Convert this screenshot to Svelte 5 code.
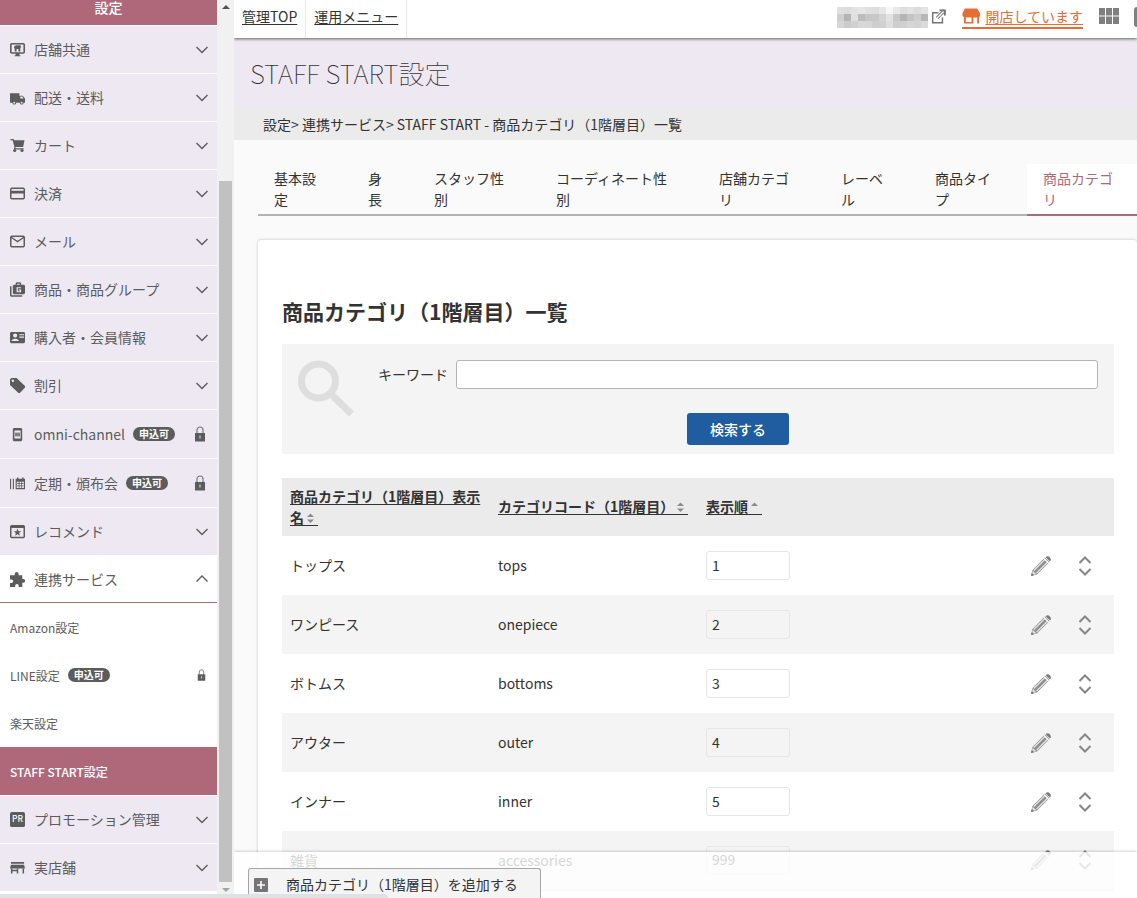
<script lang="ts">
  type MenuItem = { icon: string; label: string; locked?: boolean };

  const menuTop: MenuItem[] = [
    { icon: 'monitor', label: '店舗共通' },
    { icon: 'truck', label: '配送・送料' },
    { icon: 'cart', label: 'カート' },
    { icon: 'card', label: '決済' },
    { icon: 'mail', label: 'メール' },
    { icon: 'goods', label: '商品・商品グループ' },
    { icon: 'member', label: '購入者・会員情報' },
    { icon: 'tag', label: '割引' },
    { icon: 'phone', label: 'omni-channel', locked: true },
    { icon: 'calendar', label: '定期・頒布会', locked: true },
    { icon: 'star', label: 'レコメンド' }
  ];

  const menuBottom: MenuItem[] = [
    { icon: 'pr', label: 'プロモーション管理' },
    { icon: 'shop', label: '実店舗' }
  ];

  const subMenu = [
    { label: 'Amazon設定' },
    { label: 'LINE設定', locked: true },
    { label: '楽天設定' },
    { label: 'STAFF START設定', active: true }
  ];

  const tabs = [
    '基本設\n定',
    '身\n長',
    'スタッフ性\n別',
    'コーディネート性\n別',
    '店舗カテゴ\nリ',
    'レーベ\nル',
    '商品タイ\nプ',
    '商品カテゴ\nリ'
  ];
  let activeTab = $state(7);

  let keyword = $state('');
  let rows = $state([
    { name: 'トップス', code: 'tops', order: '1' },
    { name: 'ワンピース', code: 'onepiece', order: '2' },
    { name: 'ボトムス', code: 'bottoms', order: '3' },
    { name: 'アウター', code: 'outer', order: '4' },
    { name: 'インナー', code: 'inner', order: '5' },
    { name: '雑貨', code: 'accessories', order: '999' }
  ]);

  // 伏せ字になっているショップ名のモザイク
  const mosaic = [
    '#e0e0e0', '#dcdcdc', '#e2e2e2', '#e6e6e6', '#e0e0e0', '#dedede', '#e6e6e6', '#f6f6f6', '#e8e8e8', '#dedede', '#e2e2e2', '#dcdcdc', '#e4e4e4',
    '#cfcfcf', '#b4b4b4', '#e0e0e0', '#bcbcbc', '#c6c6c6', '#c8c8c8', '#d4d4d4', '#e2e2e2', '#c8c8c8', '#b4b4b4', '#c4c4c4', '#cecece', '#b8b8b8',
    '#d6d6d6', '#cccccc', '#d0d0d0', '#d8d8d8', '#d6d6d6', '#cecece', '#d0d0d0', '#dedede', '#cecece', '#d0d0d0', '#d6d6d6', '#d4d4d4', '#dadada'
  ];
</script>

{#snippet menuIcon(name: string)}
  <svg class="menu-icon" viewBox="0 0 16 16" fill="currentColor" aria-hidden="true">
    {#if name === 'monitor'}
      <path fill-rule="evenodd" d="M1.500 1h13l1.500 1v9.500l-1.500 1H10V14h1v1.300H5V14h1v-1.500H1.500L0 11.500V2zM1.700 2.600V11h12.600V2.600z" />
      <path d="M5 4 7 3.500h4.500V6.500H11V10H9V7.500H7V10H5V7l-.8-.5z" />
    {:else if name === 'truck'}
      <path fill-rule="evenodd" d="M0 3.500h10V6h3.500L16 9v4.500h-1.500a2 2 0 0 1-4 0H6.500a2 2 0 0 1-4 0H0zM11 7v2h3.500L13 7zM4.500 12.500a1 1 0 1 0 0 2 1 1 0 0 0 0-2zm8 0a1 1 0 1 0 0 2 1 1 0 0 0 0-2z" />
    {:else if name === 'cart'}
      <path d="M.5 1h3.300l.7 1.500H15.500L14 9.500H6L5.800 11H14.500v1.200H4.200l.5-3L2.800 2.500H.5z" />
      <circle cx="5" cy="13.300" r="1.700" /><circle cx="12.800" cy="13.300" r="1.700" />
    {:else if name === 'card'}
      <path fill-rule="evenodd" d="M1.500 1.500h13L16 3v10l-1.500 1.500h-13L0 13V3zM1.600 3.200V5h12.800V3.200zM1.600 8v4.800h12.800V8z" />
    {:else if name === 'mail'}
      <path fill-rule="evenodd" d="M1.500 1.500h13L16 3v10l-1.500 1.500h-13L0 13V3zM1.600 4.600v8.300h12.800V4.600L8 9zM2 3.100 8 7.200l6-4.100z" />
    {:else if name === 'goods'}
      <path d="M0 4.500h1.600V14H13v1.600H1L0 14.600z" />
      <path fill-rule="evenodd" d="M6 3V1.500L7 .3h4l1 1.200V3h3l1 1v8l-1 1H4l-1-1V4l1-1zM7.500 1.800V3h3V1.800zM7 5.500v5.500h4.800V8H9.300v1h1.200v.8H8.300V6.700h3.500V5.500z" />
    {:else if name === 'member'}
      <path fill-rule="evenodd" d="M1.200 2h13.600L16 3v10l-1.200 1H1.200L0 13V3zM5.500 3.700a2.200 2.200 0 1 0 0 4.400 2.200 2.200 0 0 0 0-4.400zM1.800 11.800h7.500v-.8C8.500 9.700 7 9.200 5.500 9.200S2.500 9.700 1.800 11zM10 4.500v1.200h5V4.500zM10 7v1.200h5V7z" />
    {:else if name === 'tag'}
      <path fill-rule="evenodd" d="M1.500 0H7l9 8.500v1.500L10.500 16H9L0 7.500V1.500zM3 1.700a1.300 1.300 0 1 0 0 2.600 1.300 1.300 0 0 0 0-2.600z" />
    {:else if name === 'phone'}
      <path fill-rule="evenodd" d="M4 1h8l1 1v12l-1 1.300H4L3 14V2zM4.700 3.800v8.400h6.600V3.800z" />
      <path d="M5.300 6h5.400v4H5.300z" opacity=".75" />
    {:else if name === 'calendar'}
      <path d="M0 3h1.200v11H0zM3 3h1.200v11H3z" />
      <path fill-rule="evenodd" d="M6 3h1.500V1.500H9V3h4V1.500h1.500V3H16v11H6zM7.200 6v6.800h7.600V6z" />
      <path d="M7.500 8h7M7.500 10.500h7M9.700 6v7M12.300 6v7" stroke="currentColor" stroke-width=".8" />
    {:else if name === 'star'}
      <path fill-rule="evenodd" d="M1.500 1h13L16 2v12l-1.500 1.300h-13L0 14V2zM1.600 4.300v9.400h12.800V4.300z" />
      <path d="m8 4.900 1.100 2.700 2.900.2-2.200 1.900.7 2.800L8 11l-2.500 1.500.7-2.800L4 7.800l2.900-.2z" />
    {:else if name === 'puzzle'}
      <path d="M1 3.500h4V2.200a2 2 0 0 1 4.200 0v1.300h3.900v3.900h.9a2.050 2.050 0 0 1 0 4.100h-.9V16H9.300v-1.400a1.900 1.900 0 0 0-3.800 0V16H0v-4.200h1.500a1.900 1.900 0 0 0 0-3.800H0V3.500z" />
    {:else if name === 'pr'}
      <rect width="16" height="16" rx="2" />
      <text x="8" y="11" text-anchor="middle" font-size="9" font-weight="500" fill="#fff">PR</text>
    {:else if name === 'shop'}
      <path d="M1 2h14v2H1zM1 5h14l1 4H0z" />
      <path d="M1 9h1.600v5.500H1zM7.200 9h1.600v5.500H7.200zM13.400 9H15v5.500h-1.600zM1 10.500h7.500v1.400H1z" />
    {/if}
  </svg>
{/snippet}

{#snippet chevron(up: boolean)}
  <svg class="chevron" viewBox="0 0 12 8" aria-hidden="true">
    <path d={up ? 'M.5 6.500 6 1l5.500 5.500' : 'M.5 1 6 6.500 11.500 1'} fill="none" stroke="currentColor" stroke-width="1.400" />
  </svg>
{/snippet}

{#snippet lock()}
  <svg class="lock" viewBox="0 0 12 16" aria-hidden="true">
    <path d="M3 7V4a3 3 0 0 1 6 0v3" fill="none" stroke="#777" stroke-width="1.200" />
    <path fill-rule="evenodd" d="M1 7h10v8.500H1zM5.500 9.500v3h1v-3z" fill="currentColor" />
  </svg>
{/snippet}

{#snippet menuRow(item: MenuItem)}
  <li class="menu-row" class:tall={item.locked}>
    <a href="#menu">
      {@render menuIcon(item.icon)}
      <span>{item.label}</span>
      {#if item.locked}
        <span class="badge">申込可</span>
        {@render lock()}
      {:else}
        {@render chevron(false)}
      {/if}
    </a>
  </li>
{/snippet}

{#snippet sortMark(both: boolean)}
  <svg class="sort" viewBox="0 0 14 16" aria-hidden="true">
    <path d="M3 6 6.500 2.500 10 6z" fill="#8b8b8b" />
    {#if both}
      <path d="M3 8.500 6.500 12 10 8.500z" fill="#8b8b8b" />
    {/if}
    <rect y="14" width="14" height="1" fill="#333" />
  </svg>
{/snippet}

<div class="app">
  <aside class="sidebar">
    <nav>
      <h2 class="menu-title">設定</h2>
      <ul>
        {#each menuTop as item}
          {@render menuRow(item)}
        {/each}
        <li class="menu-row open">
          <a href="#menu">
            {@render menuIcon('puzzle')}
            <span>連携サービス</span>
            {@render chevron(true)}
          </a>
        </li>
        {#each subMenu as sub}
          <li class="sub-row" class:active={sub.active}>
            <a href="#sub">
              <span>{sub.label}</span>
              {#if sub.locked}
                <span class="badge">申込可</span>
                {@render lock()}
              {/if}
            </a>
          </li>
        {/each}
        {#each menuBottom as item}
          {@render menuRow(item)}
        {/each}
      </ul>
    </nav>
    <div class="scrollbar">
      <svg viewBox="0 0 8 4" class="arrow"><path d="M0 4 4 0l4 4z" fill="#505050" /></svg>
      <div class="thumb"></div>
      <svg viewBox="0 0 8 4" class="arrow"><path d="M0 0h8L4 4z" fill="#a3a3a3" /></svg>
    </div>
  </aside>

  <div class="main">
    <header class="topbar">
      <a class="top-link" href="#top">管理TOP</a>
      <a class="top-link" href="#menu">運用メニュー</a>
      <div class="top-right">
        <div class="mosaic">
          {#each mosaic as color}
            <span style="background: {color}"></span>
          {/each}
        </div>
        <svg class="external" viewBox="0 0 16 16" fill="none" stroke="#757575" aria-hidden="true">
          <path d="M8 4H1.800v10.700h10.400V9" stroke-width="1.600" />
          <path d="M9 1.500h5.800V7" stroke-width="2" />
          <path d="M14.500 1.500 6.500 9.500" stroke-width="3.600" />
          <path d="M13.500 2.700 6.700 9.300" stroke="#fff" stroke-width="1.400" />
        </svg>
        <a class="shop-status" href="#status">
          <svg viewBox="0 0 20 18" aria-hidden="true">
            <path fill-rule="evenodd" d="M3 1h13l3 5v3l-1 1v7h-2v-6.500h-4V17H2v-7L.5 9V6zM4 10.500v4.800h6v-4.800z" fill="#e86c35" />
          </svg>
          <span>開店しています</span>
        </a>
        <svg class="apps" viewBox="0 0 20 16" fill="#808080" aria-hidden="true">
          <path d="M0 0h6v7.500H0zM7 0h6v7.500H7zM14 0h6v7.500h-6zM0 8.500h6V16H0zM7 8.500h6V16H7zM14 8.500h6V16h-6z" />
        </svg>
        <span class="edge-icon"></span>
      </div>
    </header>

    <h1>STAFF START設定</h1>
    <div class="breadcrumb">設定&gt; 連携サービス&gt; STAFF START - 商品カテゴリ（1階層目）一覧</div>

    <div class="content">
      <div class="tabs" role="tablist">
        {#each tabs as tab, i}
          <button type="button" role="tab" aria-selected={activeTab === i} class:active={activeTab === i} onclick={() => (activeTab = i)}>{tab}</button>
        {/each}
      </div>

      <section class="card">
        <h2>商品カテゴリ（1階層目）一覧</h2>

        <form class="search" onsubmit={(e) => e.preventDefault()}>
          <svg class="loupe" viewBox="0 0 56 56" aria-hidden="true">
            <circle cx="20.500" cy="21" r="17" fill="none" stroke="#dedede" stroke-width="7" />
            <path d="m32.500 33.500 21 20.500" stroke="#dedede" stroke-width="7" />
          </svg>
          <div class="fields">
            <div class="field">
              <label for="keyword">キーワード</label>
              <input id="keyword" type="text" bind:value={keyword} />
            </div>
            <button type="submit">検索する</button>
          </div>
        </form>

        <table>
          <thead>
            <tr>
              <th><a href="#name">商品カテゴリ（1階層目）表示名{@render sortMark(true)}</a></th>
              <th><a href="#code">カテゴリコード（1階層目）{@render sortMark(true)}</a></th>
              <th><a href="#order">表示順{@render sortMark(false)}</a></th>
              <th></th>
            </tr>
          </thead>
          <tbody>
            {#each rows as row}
              <tr>
                <td>{row.name}</td>
                <td>{row.code}</td>
                <td><input type="text" aria-label="表示順" bind:value={row.order} /></td>
                <td>
                  <div class="actions">
                    <button type="button" aria-label="編集">
                      <svg class="pencil" viewBox="0 0 20 20" aria-hidden="true">
                        <path d="M0 20 1.500 14 14 1.500 18.500 6 6 18.500z" fill="#8f8f8f" />
                        <path d="M2.800 14.500 14 3.300M5.500 17.200 16.700 6" stroke="#e8e8e8" stroke-width="1.200" />
                        <path d="m1.800 14.800 3.400 3.400-2.700.6-1.300-1.300z" fill="#e2e2e2" />
                        <path d="m13 2.500 4.500 4.500" stroke="#fff" stroke-width="1.200" />
                        <path d="M14.500 1.200C16-.2 17.500-.2 18.800 1.200s1.500 2.800.2 4.200z" fill="#7c7c7c" />
                        <path d="M0 20 .8 17l2.200 2.200z" fill="#757575" />
                      </svg>
                    </button>
                    <button type="button" aria-label="並び替え">
                      <svg class="mover" viewBox="0 0 14 20" fill="none" stroke="#868686" stroke-width="2" aria-hidden="true">
                        <path d="m1.500 7 5.500-5.500L12.500 7M1.500 13l5.500 5.500 5.500-5.500" />
                      </svg>
                    </button>
                  </div>
                </td>
              </tr>
            {/each}
          </tbody>
        </table>
      </section>
    </div>

    <footer class="action-bar">
      <button type="button">
        <svg viewBox="0 0 14 14" aria-hidden="true">
          <rect width="14" height="14" rx="1" fill="#757575" />
          <path d="M7 3v8M3 7h8" stroke="#fff" stroke-width="1.600" />
        </svg>
        商品カテゴリ（1階層目）を追加する
      </button>
    </footer>
  </div>

  <div class="status-bubble"></div>
</div>

<style>
  :global(body) {
    margin: 0;
  }
  .app {
    position: relative;
    display: flex;
    height: 100vh;
    overflow: hidden;
    background: #fafafa;
    color: #333;
    font-family: 'Noto Sans CJK JP', 'Noto Sans', sans-serif;
    font-size: 14px;
    line-height: 21px;
  }
  .app * {
    box-sizing: border-box;
  }
  button,
  input {
    font: inherit;
    color: inherit;
  }
  button {
    padding: 0;
    border: 0;
    background: none;
    cursor: pointer;
  }

  /* サイドバー */
  .sidebar {
    display: flex;
    flex: none;
    width: 234px;
    background: #fff;
  }
  nav {
    flex: 1;
    color: #5c5c5c;
  }
  nav ul {
    margin: 0;
    padding: 0;
    list-style: none;
  }
  nav a {
    display: flex;
    align-items: center;
    height: 100%;
    padding: 0 10px;
    color: inherit;
    text-decoration: none;
  }
  .menu-title {
    height: 25px;
    margin: 0;
    background: #af687a;
    color: #fff;
    font-size: 14px;
    font-weight: 500;
    line-height: 14px;
    text-align: center;
  }
  .menu-row {
    height: 48px;
    border-top: 1px solid #fff;
    background: #eee8f3;
  }
  .menu-row.tall {
    height: 49px;
  }
  .menu-row.open {
    border-bottom: 1px solid #af687a;
    background: #fff;
  }
  .menu-icon {
    flex: none;
    width: 15px;
    height: 15px;
    margin-right: 9px;
  }
  .chevron {
    width: 12px;
    height: 8px;
    margin: 0 -1px 0 auto;
  }
  .lock {
    width: 12px;
    height: 16px;
    margin: 0 1px 0 auto;
  }
  .badge {
    height: 14px;
    margin-left: 8px;
    padding: 0 6px;
    border-radius: 7px;
    background: #5c5c5c;
    color: #fff;
    font-size: 10px;
    font-weight: 700;
    line-height: 14px;
  }
  .sub-row {
    height: 48px;
    font-size: 12px;
  }
  .sub-row .lock {
    width: 9px;
    height: 12px;
  }
  .sub-row.active {
    background: #af687a;
    color: #fff;
    font-weight: 500;
  }
  .scrollbar {
    display: flex;
    flex-direction: column;
    align-items: center;
    width: 17px;
    padding: 5px 2px 6px;
    background: #f1f1f1;
  }
  .arrow {
    flex: none;
    width: 8px;
    height: 4px;
  }
  .thumb {
    flex: 1;
    width: 13px;
    margin: 172px 0 6px;
    background: #c1c1c1;
  }

  /* ヘッダー */
  .main {
    position: relative;
    flex: 1;
    min-width: 0;
    overflow: hidden;
  }
  .topbar {
    position: relative;
    display: flex;
    height: 38px;
    background: #fff;
    box-shadow: 0 1px 3px rgba(0, 0, 0, 0.6);
  }
  .top-link {
    padding: 6px 8px 0;
    border-right: 1px solid #e6e6e6;
    color: #333;
    text-underline-offset: 2px;
  }
  .top-right {
    display: flex;
    align-items: flex-start;
    margin-left: auto;
    padding-top: 7px;
  }
  .mosaic {
    display: grid;
    grid-template-columns: repeat(13, 7px);
    grid-auto-rows: 7px;
  }
  .external {
    width: 15px;
    height: 15px;
    margin: 2px 16px 0 3px;
  }
  .shop-status {
    display: flex;
    height: 22px;
    border-bottom: 2px solid #e86c35;
    color: #e86c35;
    text-decoration: none;
    line-height: 18px;
  }
  .shop-status span {
    text-decoration: underline;
    text-underline-offset: 2px;
  }
  .shop-status svg {
    width: 19px;
    height: 18px;
    margin-right: 4px;
  }
  .apps {
    width: 20px;
    height: 16px;
    margin: 1px 15px 0 16px;
  }
  .edge-icon {
    width: 3px;
    height: 20px;
    border-radius: 3px 0 0 3px;
    background: #808080;
  }
  h1 {
    height: 71px;
    margin: 0;
    padding-left: 16px;
    background: #eee8f3;
    font-size: 26px;
    font-weight: 100;
    line-height: 70px;
  }
  .breadcrumb {
    padding: 5px 29px;
    background: #ebebeb;
  }
  .content {
    padding: 24px 0 0 24px;
  }

  /* タブ */
  .tabs {
    display: flex;
    margin-right: -24px;
  }
  .tabs button {
    flex: none;
    padding: 4px 36px 4px 16px;
    border-bottom: 2px solid #b3b3b3;
    text-align: left;
    white-space: pre;
  }
  .tabs button.active {
    border-color: #af687a;
    background: #fff;
    color: #af687a;
  }

  /* 一覧 */
  .card {
    margin-top: 24px;
    padding: 56px 23px 24px 24px;
    border-radius: 3px;
    background: #fff;
    box-shadow: 0 0 3px rgba(0, 0, 0, 0.25);
  }
  .card h2 {
    margin: 0 0 18px;
    font-size: 21px;
    font-weight: 700;
    line-height: 30px;
  }
  .search {
    display: flex;
    gap: 24px;
    padding: 16px 16px 9px;
    background: #f4f4f4;
  }
  .loupe {
    flex: none;
    width: 56px;
    height: 56px;
  }
  .fields {
    display: flex;
    flex: 1;
    flex-direction: column;
    align-items: center;
    gap: 24px;
  }
  .field {
    display: flex;
    align-items: center;
    gap: 8px;
    width: 100%;
  }
  .field input {
    flex: 1;
    height: 29px;
    padding: 0 8px;
    border: 1px solid #b3b3b3;
    border-radius: 3px;
    background: #fff;
  }
  .fields button {
    width: 102px;
    height: 32px;
    border-radius: 3px;
    background: #1f5da0;
    color: #fff;
    font-weight: 500;
  }
  table {
    width: 100%;
    margin-top: 24px;
    border-collapse: collapse;
    table-layout: fixed;
  }
  th {
    height: 58px;
    padding: 7px 8px 8px;
    background: #ebebeb;
    font-weight: 700;
    text-align: left;
  }
  th a {
    color: #333;
    text-underline-offset: 2px;
    text-decoration-thickness: 1px;
  }
  .sort {
    width: 14px;
    height: 16px;
    vertical-align: -4px;
  }
  td {
    height: 59px;
    padding: 0 8px;
  }
  tbody tr:nth-child(even) {
    background: #f4f4f4;
  }
  tbody tr:last-child td {
    border-bottom: 1px solid #d9d9d9;
  }
  td input {
    display: block;
    width: 84px;
    height: 29px;
    padding: 0 5px 2px;
    border: 1px solid #e6e6e6;
    border-radius: 3px;
    background: transparent;
  }
  .actions {
    display: flex;
    justify-content: flex-end;
    gap: 27px;
    padding-right: 14px;
  }
  .actions svg {
    display: block;
    height: 20px;
  }
  .pencil {
    width: 20px;
  }
  .mover {
    width: 14px;
  }

  .action-bar {
    position: absolute;
    right: 0;
    bottom: 0;
    left: 0;
    padding: 16px 14px 0;
    background: rgba(255, 255, 255, 0.8);
    box-shadow: 0 0 3px rgba(0, 0, 0, 0.3);
  }
  .action-bar button {
    display: flex;
    align-items: center;
    gap: 18px;
    height: 30px;
    padding: 2px 22px 0 5px;
    border: 1px solid #a6a6a6;
    border-bottom: 0;
    border-radius: 3px 3px 0 0;
    background: #f4f4f4;
  }
  .action-bar svg {
    width: 14px;
    height: 14px;
  }
  .status-bubble {
    position: absolute;
    bottom: 0;
    left: 0;
    width: 388px;
    height: 4px;
    border-radius: 0 4px 0 0;
    background: #dee1e6;
  }
</style>
